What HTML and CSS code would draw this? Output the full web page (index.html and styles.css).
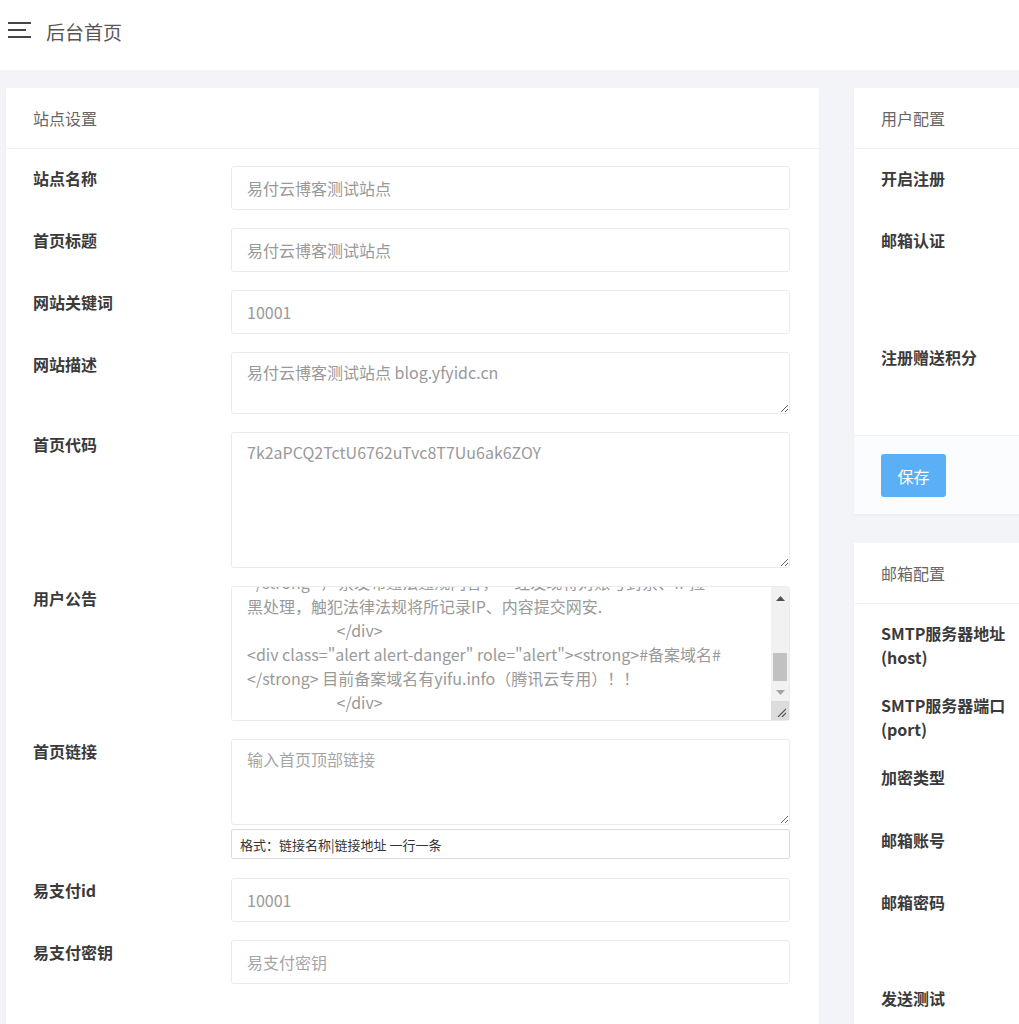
FILE: index.html
```html
<!DOCTYPE html>
<html lang="zh-CN">
<head>
<meta charset="utf-8">
<title>后台首页</title>
<link rel="stylesheet" href="styles.css">
</head>
<body>
<header class="topbar">
  <span class="menu-icon">
    <svg width="24" height="16" viewBox="0 0 24 16"><rect x="0" y="0" width="23" height="2" fill="#454545"/><rect x="0" y="7" width="18" height="2" fill="#454545"/><rect x="0" y="14" width="23" height="2" fill="#454545"/></svg>
  </span>
  <span class="page-title">后台首页</span>
</header>

<main class="main">
  <section class="card card-main">
    <div class="card-header">站点设置</div>
    <div class="card-body">
      <div class="form-row">
        <label class="form-label">站点名称</label>
        <div><input class="form-control" type="text" value="易付云博客测试站点"></div>
      </div>
      <div class="form-row">
        <label class="form-label">首页标题</label>
        <div><input class="form-control" type="text" value="易付云博客测试站点"></div>
      </div>
      <div class="form-row">
        <label class="form-label">网站关键词</label>
        <div><input class="form-control" type="text" value="10001"></div>
      </div>
      <div class="form-row">
        <label class="form-label">网站描述</label>
        <div><textarea class="form-control ta-desc">易付云博客测试站点 blog.yfyidc.cn</textarea></div>
      </div>
      <div class="form-row">
        <label class="form-label">首页代码</label>
        <div><textarea class="form-control ta-code">7k2aPCQ2TctU6762uTvc8T7Uu6ak6ZOY</textarea></div>
      </div>
      <div class="form-row">
        <label class="form-label">用户公告</label>
        <div class="notice-wrap">
          <textarea class="form-control ta-notice notice"><div class="alert alert-light" role="alert"><strong>#说明#
</strong> 本站为易付云博客测试站点，所有数据仅供测试使用。
                         </div>
<div class="alert alert-info" role="alert"><strong>#公告#
</strong> 欢迎来到易付云博客测试站点，本站提供博客发布服务。
                         </div>
<div class="alert alert-success" role="alert"><strong>#积分#
</strong> 注册即送积分，每日签到可获得额外积分奖励。
                         </div>
<div class="alert alert-warning" role="alert"><strong>#警告#
</strong> 严禁发布违法违规内容，一经发现将对账号封禁、IP拉
黑处理，触犯法律法规将所记录IP、内容提交网安.
                         </div>
<div class="alert alert-danger" role="alert"><strong>#备案域名#
</strong> 目前备案域名有yifu.info（腾讯云专用）！！
                         </div>

<div class="alert alert-primary" role="alert"><strong>#联系#
</strong> 如有问题请联系站长QQ：10001
                         </div></textarea>
          <div class="fake-scroll" aria-hidden="true">
            <div class="sb-btn sb-up"><svg width="9" height="5" viewBox="0 0 9 5"><path d="M0 5 L4.5 0 L9 5 Z" fill="#505050"/></svg></div>
            <div class="sb-track"><div class="sb-thumb"></div></div>
            <div class="sb-btn sb-down"><svg width="9" height="5" viewBox="0 0 9 5"><path d="M0 0 L4.5 5 L9 0 Z" fill="#a3a3a3"/></svg></div>
            <div class="sb-resizer"><svg width="10" height="10" viewBox="0 0 10 10"><path d="M2 10 L10 2 M6 10 L10 6" stroke="#555" stroke-width="1.2" fill="none"/></svg></div>
          </div>
        </div>
      </div>
      <div class="form-row row-links">
        <label class="form-label">首页链接</label>
        <div>
          <textarea class="form-control ta-links" placeholder="输入首页顶部链接"></textarea>
          <input class="help-input" type="text" value="格式：链接名称|链接地址 一行一条" readonly>
        </div>
      </div>
      <div class="form-row">
        <label class="form-label">易支付id</label>
        <div><input class="form-control" type="text" value="10001"></div>
      </div>
      <div class="form-row">
        <label class="form-label">易支付密钥</label>
        <div><input class="form-control" type="text" placeholder="易支付密钥"></div>
      </div>
    </div>
  </section>

  <aside class="side">
    <section class="card">
      <div class="card-header">用户配置</div>
      <div class="card-body side-body">
        <div class="form-row side-row">
          <label class="form-label">开启注册</label>
          <div><select class="form-control"><option>开启</option></select></div>
        </div>
        <div class="form-row side-row">
          <label class="form-label">邮箱认证</label>
          <div class="ctl h99"><select class="form-control"><option>关闭</option></select></div>
        </div>
        <div class="form-row side-row">
          <label class="form-label">注册赠送积分</label>
          <div class="ctl h72"><input class="form-control" type="text" value="0"></div>
        </div>
      </div>
      <div class="card-footer">
        <button class="btn-save" type="button">保存</button>
      </div>
    </section>

    <section class="card">
      <div class="card-header">邮箱配置</div>
      <div class="card-body side-body">
        <div class="form-row side-row">
          <label class="form-label">SMTP服务器地址 (host)</label>
          <div><input class="form-control" type="text"></div>
        </div>
        <div class="form-row side-row">
          <label class="form-label">SMTP服务器端口 (port)</label>
          <div><input class="form-control" type="text"></div>
        </div>
        <div class="form-row side-row">
          <label class="form-label">加密类型</label>
          <div class="ctl h45"><select class="form-control"><option>SSL</option></select></div>
        </div>
        <div class="form-row side-row">
          <label class="form-label">邮箱账号</label>
          <div><input class="form-control" type="text"></div>
        </div>
        <div class="form-row side-row">
          <label class="form-label">邮箱密码</label>
          <div class="ctl h78"><input class="form-control" type="password"></div>
        </div>
        <div class="form-row side-row">
          <label class="form-label">发送测试</label>
          <div><input class="form-control" type="text"></div>
        </div>
      </div>
    </section>
  </aside>
</main>
<script src="script.js"></script>
</body>
</html>
```

FILE: styles.css
```css
html {
  overflow: hidden;
}

body {
  margin: 0;
  background: #f3f4f8;
  font-family: "Noto Sans CJK SC", "Liberation Sans", sans-serif;
  color: #333;
}

.topbar {
  height: 70px;
  box-sizing: border-box;
  background: #fff;
  display: flex;
  align-items: center;
  padding: 0 0 10px 8px;
  gap: 14px;
}

.menu-icon {
  display: flex;
  width: 24px;
  height: 16px;
}

.page-title {
  font-size: 19px;
  color: #555;
  margin-top: 2px;
}

.main {
  display: flex;
  align-items: flex-start;
  gap: 35px;
  padding: 18px 0 0 6px;
}

.card {
  background: #fff;
  box-shadow: 0 1px 2px rgba(0, 0, 0, 0.04);
}

.card-main {
  width: 813px;
  flex-shrink: 0;
}

.side {
  width: 560px;
  flex-shrink: 0;
  display: flex;
  flex-direction: column;
  gap: 29px;
}

.card-header {
  height: 61px;
  box-sizing: border-box;
  display: flex;
  align-items: center;
  padding: 0 27px 1px;
  border-bottom: 1px solid #f1f2f4;
  font-size: 16px;
  color: #666;
}

.card-body {
  display: flow-root;
  padding: 17px 29px 30px 27px;
}

.side-body {
  padding-bottom: 0;
}

.form-row {
  display: grid;
  grid-template-columns: 198px 1fr;
  margin-bottom: 18px;
}

.row-links {
  margin-bottom: 19px;
}

.side-row {
  grid-template-columns: 150px 1fr;
}

.form-label {
  font-size: 16px;
  font-weight: 700;
  line-height: 24px;
  color: #3a3a3a;
  padding: 0 0 6px;
}

.form-control {
  display: block;
  box-sizing: border-box;
  width: 100%;
  height: 44px;
  margin: 0;
  padding: 0 15px;
  border: 1px solid #ebebeb;
  border-radius: 3px;
  background: #fff;
  font-family: "Noto Sans CJK SC", "Liberation Sans", sans-serif;
  font-size: 16px;
  color: #999;
  outline: none;
}

.form-control::placeholder {
  color: #a5a5a5;
}

textarea.form-control {
  padding: 7px 15px;
  line-height: 24px;
  resize: vertical;
}

.ta-desc {
  height: 62px;
}

.ta-code {
  height: 136px;
}

.notice-wrap {
  position: relative;
}

textarea.ta-notice {
  height: 135px;
  overflow-y: scroll;
  padding-right: 33px;
  resize: none;
}

.fake-scroll {
  position: absolute;
  top: 1px;
  right: 1px;
  bottom: 1px;
  width: 18px;
  display: flex;
  flex-direction: column;
  background: #f1f1f1;
}

.sb-btn {
  height: 17px;
  display: flex;
  align-items: center;
  justify-content: center;
}

.sb-up {
  padding-top: 3px;
}

.sb-track {
  flex: 1;
  position: relative;
}

.sb-thumb {
  position: absolute;
  left: 2px;
  right: 2px;
  top: 46px;
  height: 28px;
  background: #c1c1c1;
}

.sb-resizer {
  height: 19px;
  background: #dcdcdc;
  display: flex;
  align-items: flex-end;
  justify-content: flex-end;
  padding: 0 3px 3px 0;
  box-sizing: border-box;
}

.ta-links {
  height: 86px;
}

.help-input {
  display: block;
  box-sizing: border-box;
  width: 100%;
  height: 30px;
  margin: 4px 0 0;
  padding: 0 8px;
  border: 1px solid #dcdcdc;
  border-radius: 2px;
  background: #fff;
  font-family: "Noto Sans CJK SC", "Liberation Sans", sans-serif;
  font-size: 13px;
  color: #333;
  outline: none;
}

.ctl.h99 {
  height: 99px;
}

.ctl.h72 {
  height: 72px;
}

.ctl.h45 {
  height: 45px;
}

.ctl.h78 {
  height: 78px;
}

.card-footer {
  padding: 18px 27px 17px;
  border-top: 1px solid #f1f2f4;
  background: #fbfcfd;
}

.btn-save {
  width: 65px;
  height: 43px;
  border: none;
  border-radius: 3px;
  background: #5aaff5;
  color: #fff;
  font-family: "Noto Sans CJK SC", "Liberation Sans", sans-serif;
  font-size: 16px;
  padding: 0;
}
```

FILE: script.js
```js
var notice = document.querySelector('.notice');
if (notice) {
  notice.scrollTop = 24 * 11;
}
```
